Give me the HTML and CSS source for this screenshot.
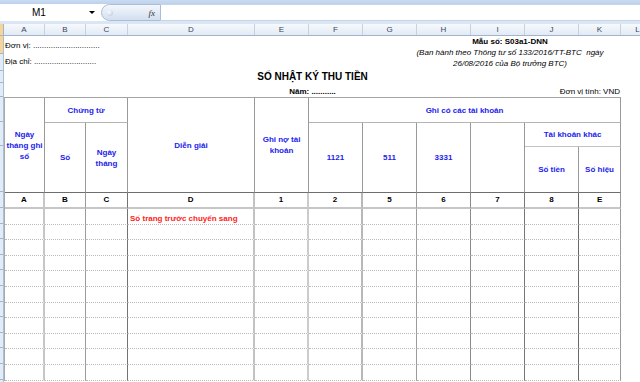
FILE: index.html
```html
<!DOCTYPE html>
<html lang="vi">
<head>
	<meta charset="UTF-8">
	<title>Sổ nhật ký thu tiền</title>
	<link rel="stylesheet" href="styles.css">
</head>
<body>
	<div class="ribbon-edge"></div>
	<div class="formula-bar">
		<div class="name-box">M1<span class="drop"></span></div>
		<div class="fx-pill"><span class="grip"></span><span class="fx">fx</span></div>
		<div class="formula-input"></div>
	</div>
	<div class="gap-strip"></div>

	<div class="col-heads">
		<div class="corner"></div>
		<div>A</div><div>B</div><div>C</div><div>D</div><div>E</div><div>F</div>
		<div>G</div><div>H</div><div>I</div><div>J</div><div>K</div><div>L</div>
	</div>

	<div class="sheet">
		<!-- row numbers are scrolled off, only the edge shows -->
		<div class="row-heads">
			<div class="rh sel r18"></div>
			<div class="rh r17"></div>
			<div class="rh r12"></div>
			<div class="rh r14"></div>
			<div class="rh r25"></div>
			<div class="rh r24"></div>
			<div class="rh r46"></div>
			<div class="rh r16"></div>
			<div class="rh"></div><div class="rh"></div><div class="rh"></div>
			<div class="rh"></div><div class="rh"></div><div class="rh"></div>
			<div class="rh"></div><div class="rh"></div><div class="rh"></div>
			<div class="rh"></div><div class="rh"></div><div class="rh"></div>
		</div>

		<div class="page">
			<div class="doc-top">
				<div class="unit-info">
					<div>Đơn vị: ..............................</div>
					<div>Địa chỉ: ............................</div>
				</div>
				<div class="form-code">
					<b>Mẫu số: S03a1-DNN</b>
					<i>(Ban hành theo Thông tư số 133/2016/TT-BTC&nbsp; ngày</i>
					<i>26/08/2016 của Bộ trưởng BTC)</i>
				</div>
			</div>
			<div class="title">SỔ NHẬT KÝ THU TIỀN</div>
			<div class="year-row">
				<span></span>
				<b>Năm: ...........</b>
				<span class="currency">Đơn vị tính: VND</span>
			</div>

			<table class="ledger">
				<colgroup>
					<col><col><col><col><col><col><col><col><col><col><col>
				</colgroup>
				<thead>
					<tr class="h1">
						<th rowspan="3" class="ca bot">Ngày tháng ghi sổ</th>
						<th colspan="2" class="cc">Chứng từ</th>
						<th rowspan="3" class="cd bot">Diễn giải</th>
						<th rowspan="3" class="ce bot">Ghi nợ tài khoản</th>
						<th colspan="6" class="ck">Ghi có các tài khoản</th>
					</tr>
					<tr class="h2">
						<th rowspan="2" class="cb bot">Số</th>
						<th rowspan="2" class="cc bot">Ngày tháng</th>
						<th rowspan="2" class="cf bot">1121</th>
						<th rowspan="2" class="cg bot">511</th>
						<th rowspan="2" class="ch bot">3331</th>
						<th rowspan="2" class="ci bot"></th>
						<th colspan="2" class="ck sub">Tài khoản khác</th>
					</tr>
					<tr class="h3">
						<th class="cj bot">Số tiền</th>
						<th class="ck bot">Số hiệu</th>
					</tr>
				</thead>
				<tbody>
					<tr class="codes">
						<td>A</td><td>B</td><td>C</td><td>D</td><td>1</td><td>2</td>
						<td>5</td><td>6</td><td>7</td><td>8</td><td>E</td>
					</tr>
					<tr>
						<td></td><td></td><td></td><td class="carry">Số trang trước chuyển sang</td><td></td><td></td>
						<td></td><td></td><td></td><td></td><td></td>
					</tr>
					<tr><td></td><td></td><td></td><td></td><td></td><td></td><td></td><td></td><td></td><td></td><td></td></tr>
					<tr><td></td><td></td><td></td><td></td><td></td><td></td><td></td><td></td><td></td><td></td><td></td></tr>
					<tr><td></td><td></td><td></td><td></td><td></td><td></td><td></td><td></td><td></td><td></td><td></td></tr>
					<tr><td></td><td></td><td></td><td></td><td></td><td></td><td></td><td></td><td></td><td></td><td></td></tr>
					<tr><td></td><td></td><td></td><td></td><td></td><td></td><td></td><td></td><td></td><td></td><td></td></tr>
					<tr><td></td><td></td><td></td><td></td><td></td><td></td><td></td><td></td><td></td><td></td><td></td></tr>
					<tr><td></td><td></td><td></td><td></td><td></td><td></td><td></td><td></td><td></td><td></td><td></td></tr>
					<tr><td></td><td></td><td></td><td></td><td></td><td></td><td></td><td></td><td></td><td></td><td></td></tr>
					<tr><td></td><td></td><td></td><td></td><td></td><td></td><td></td><td></td><td></td><td></td><td></td></tr>
					<tr><td></td><td></td><td></td><td></td><td></td><td></td><td></td><td></td><td></td><td></td><td></td></tr>
				</tbody>
			</table>
		</div>
	</div>
</body>
</html>
```

FILE: styles.css
```css
*{box-sizing:border-box;}
body{margin:0;width:640px;height:382px;overflow:hidden;background:#fff;font-family:"Liberation Sans",Arial,sans-serif;font-size:8px;color:#000;}

/* excel chrome */
.ribbon-edge{height:4px;background:linear-gradient(#cadbf1,#bed2ec);}
.formula-bar{display:flex;height:17px;background:#fff;}
.name-box{width:101px;display:flex;align-items:center;padding-left:32px;font-size:10px;}
.name-box .drop{margin-left:auto;margin-right:6px;width:0;height:0;border-left:3px solid transparent;border-right:3px solid transparent;border-top:3px solid #000;}
.fx-pill{width:60px;display:flex;align-items:center;border:1px solid #a8bdd8;border-radius:9px 0 0 9px;background:linear-gradient(#f4f7fc,#d2dff0);}
.fx-pill .grip{width:6px;height:6px;margin-left:5px;border-radius:50%;background:radial-gradient(circle at 35% 35%,#fff,#b4c4d9);}
.fx-pill .fx{margin-left:auto;margin-right:5px;font-family:"Liberation Serif",serif;font-style:italic;font-size:9px;color:#333;}
.formula-input{flex:1;border-top:1px solid #c6d4e7;border-bottom:1px solid #c6d4e7;}
.gap-strip{height:3px;background:#dbe6f4;}

.col-heads{display:grid;grid-template-columns:4px 41px 41px 42px 127px 54px 54px 54px 54px 54px 54px 42px 34px;height:12px;background:linear-gradient(#f6f9fd,#e3eaf5);border-bottom:1px solid #9fb6cf;}
.col-heads div{border-right:1px solid #c4d2e4;text-align:center;line-height:11px;color:#3a475a;}
.col-heads .corner{background:#f8d594;border-right-color:#9fb6cf;}

.sheet{display:flex;}
.row-heads{width:4px;flex:none;background:#e3ebf6;border-right:1px solid #a9bfd6;}
.rh{height:15.6px;border-bottom:1px solid #9fb6cf;}
.rh.sel{background:#f8d594;}
.r18{height:18px;}
.r17{height:17px;}
.r12{height:12px;}
.r14{height:14px;}
.r25{height:25px;}
.r24{height:24px;}
.r46{height:46px;}
.r16{height:16px;}
.page{flex:1;}

/* form header */
.doc-top{display:flex;height:34px;}
.unit-info{padding:2px 0 0 1px;line-height:16px;}
.form-code{width:220px;margin-left:auto;margin-right:20px;text-align:center;line-height:11px;}
.form-code b,.form-code i{display:block;}
.title{width:617px;text-align:center;font-size:10px;font-weight:bold;line-height:14px;}
.year-row{width:617px;height:13px;display:grid;grid-template-columns:1fr auto 1fr;align-items:end;line-height:10px;}
.year-row .currency{text-align:right;padding-right:1px;}

/* ledger table */
.ledger{width:617px;table-layout:fixed;border-collapse:separate;border-spacing:0;border-top:1px solid #a3a3a3;border-left:1px solid #a9a9a9;}
.ledger col:nth-child(1){width:40px;}
.ledger col:nth-child(2){width:41px;}
.ledger col:nth-child(3){width:42px;}
.ledger col:nth-child(4){width:127px;}
.ledger col:nth-child(11){width:42px;}
.ledger col{width:54px;}
.ledger th,.ledger td{padding:0;text-align:center;border-right:1px solid #999;border-bottom:1px dotted #bcbcbc;}
.ledger th{font-weight:bold;color:#2222ee;line-height:11px;border-bottom:1px solid #b4b4b4;}
.ledger th.sub{border-bottom-color:#c2c2c2;}
.ledger th.bot{border-bottom:1px solid #6e6e6e;}

.ca,.ledger tbody td:nth-child(1){border-right:2px solid #c6c6c6;}
.cb,.ledger tbody td:nth-child(2){border-right:1px solid #9a9a9a;}
.cc,.ledger tbody td:nth-child(3){border-right:1px solid #727272;}
.cd,.ledger tbody td:nth-child(4){border-right:2px solid #c2c2c2;}
.ce,.ledger tbody td:nth-child(5){border-right:2px solid #cbcbcb;}
.cf,.ledger tbody td:nth-child(6){border-right:2px solid #b8b8b8;}
.cg,.ledger tbody td:nth-child(7){border-right:1px solid #9c9c9c;}
.ch,.ledger tbody td:nth-child(8){border-right:1px solid #8a8a8a;}
.ci,.ledger tbody td:nth-child(9){border-right:1px solid #777;}
.cj,.ledger tbody td:nth-child(10){border-right:1px solid #686868;}
.ck,.ledger tbody td:nth-child(11){border-right:1px solid #999;}

.ledger .h1{height:25px;}
.ledger .h2{height:24px;}
.ledger .h3{height:46px;}
.ledger tbody tr{height:15.6px;}
.ledger .codes{height:16px;}
.ledger .codes td{font-weight:bold;line-height:10px;border-bottom:2px solid #c6c6c6;}
.ledger td.carry{text-align:left;padding-left:2px;vertical-align:bottom;line-height:11px;color:#ff1a1a;font-weight:bold;}
```
